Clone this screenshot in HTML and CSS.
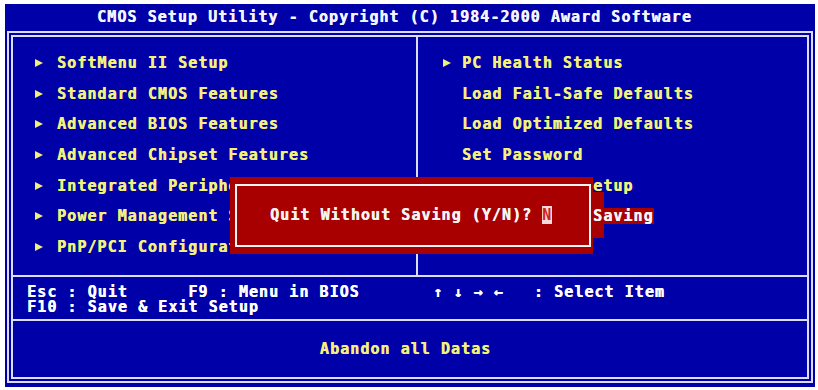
FILE: index.html
```html
<!DOCTYPE html>
<html lang="en">
<head>
    <meta charset="UTF-8">
    <title>CMOS Setup Utility</title>
    <link rel="stylesheet" href="styles.css">
</head>
<body>
    <div class="screen">
        <div class="title">CMOS Setup Utility - Copyright (C) 1984-2000 Award Software</div>
        <div class="frame">
            <div class="menu">
                <div class="col col-left">
                    <div class="item"><span class="marker"><i class="tri"></i></span>SoftMenu II Setup</div>
                    <div class="item"><span class="marker"><i class="tri"></i></span>Standard CMOS Features</div>
                    <div class="item"><span class="marker"><i class="tri"></i></span>Advanced BIOS Features</div>
                    <div class="item"><span class="marker"><i class="tri"></i></span>Advanced Chipset Features</div>
                    <div class="item"><span class="marker"><i class="tri"></i></span>Integrated Peripherals</div>
                    <div class="item"><span class="marker"><i class="tri"></i></span>Power Management Setup</div>
                    <div class="item"><span class="marker"><i class="tri"></i></span>PnP/PCI Configurations</div>
                </div>
                <div class="col col-right">
                    <div class="item"><span class="marker"><i class="tri"></i></span>PC Health Status</div>
                    <div class="item">Load Fail-Safe Defaults</div>
                    <div class="item">Load Optimized Defaults</div>
                    <div class="item">Set Password</div>
                    <div class="item">Save &amp; Exit Setup</div>
                    <div class="item"><span class="selected">Exit Without Saving</span></div>
                </div>
            </div>
            <div class="keys">
                <div class="keys-left">Esc : Quit      F9 : Menu in BIOS
F10 : Save &amp; Exit Setup</div>
                <div class="keys-right">↑ ↓ → ←   : Select Item</div>
            </div>
            <div class="help">Abandon all Datas</div>
        </div>

        <!-- red cells to the right of the box; the menu text stays visible over them -->
        <div class="dialog-shadow"></div>
        <div class="dialog">
            <div class="dialog-inner">Quit Without Saving (Y/N)? <span class="cursor">N</span></div>
        </div>
    </div>
</body>
</html>
```

FILE: styles.css
```css
body {
    margin: 0;
    background-color: white;
    font-family: "DejaVu Sans Mono", "Liberation Mono", monospace;
    font-weight: bold;
    font-size: 15px;
    letter-spacing: 1.05px;
}
.screen {
    position: relative;
    margin: 4px 0 0 5px;
    width: 810px;
    height: 383px;
    background-color: #0000a8;
    color: white;
    text-shadow: 0.5px 0 0 currentColor;
}
.title {
    height: 27px;
    line-height: 27px;
    padding-left: 92px;
    color: #f4f4ff;
    white-space: pre;
}
.frame {
    position: relative;
    z-index: 1;
    margin: 0 2px;
    border: 6px double #dcdcff;
    display: flex;
    flex-direction: column;
}
.menu {
    display: flex;
    height: 238px;
    border-bottom: 2px solid #dcdcff;
    color: #f4f07c;
}
.col {
    padding-top: 11px;
    padding-left: 44px;
    box-sizing: border-box;
}
.col-left {
    width: 405px;
    border-right: 2px solid #dcdcff;
}
.col-right {
    flex: 1;
}
.item {
    height: 30.66px;
    line-height: 30.66px;
    white-space: pre;
}
.marker {
    display: inline-flex;
    align-items: center;
    width: 22px;
    margin-left: -22px;
    height: 30px;
    vertical-align: top;
}
.col-right .marker {
    padding-left: 3px;
    box-sizing: border-box;
}
.tri {
    width: 0;
    height: 0;
    border-left: 8px solid #f4f07c;
    border-top: 4px solid transparent;
    border-bottom: 4px solid transparent;
}
.selected {
    background-color: #a80000;
    color: #f4f4f4;
    line-height: 16px;
    display: inline-block;
}
.keys {
    display: flex;
    height: 44px;
    border-bottom: 2px solid #dcdcff;
    line-height: 15px;
    padding-top: 8px;
    box-sizing: border-box;
    white-space: pre;
}
.keys-left {
    width: 406px;
    padding-left: 14px;
}
.keys-right {
    flex: 1;
}
.help {
    height: 56px;
    display: flex;
    align-items: center;
    justify-content: center;
    padding-right: 9px;
    color: #f4f07c;
}
.dialog {
    position: absolute;
    z-index: 2;
    left: 225px;
    top: 173px;
    width: 363px;
    height: 77px;
    background-color: #a80000;
    padding: 7px 2px 7px 5px;
    box-sizing: border-box;
}
.dialog-inner {
    height: 100%;
    border: 2px solid #f4f4f4;
    box-sizing: border-box;
    line-height: 59px;
    padding-left: 33px;
    white-space: pre;
    color: #f4f4f4;
}
.cursor {
    background-color: #f4dada;
    color: #d02020;
    text-shadow: none;
}
.dialog-shadow {
    position: absolute;
    z-index: 0;
    left: 588px;
    top: 188px;
    width: 11px;
    height: 46px;
    background-color: #a80000;
}
```
